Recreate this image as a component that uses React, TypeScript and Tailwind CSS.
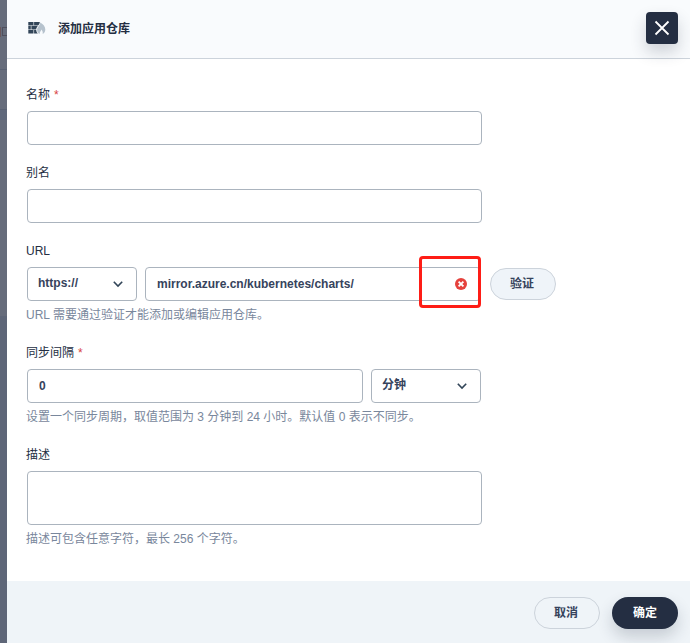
import React from 'react';

type FieldProps = {
  label: string;
  required?: boolean;
  hint?: string;
  children: React.ReactNode;
};

const inputCss =
  'block h-[34px] rounded-[4px] border border-[#abb4be] bg-white px-[11px] font-bold text-[#36435c] outline-none';

const Field: React.FC<FieldProps> = ({ label, required, hint, children }) => (
  <div>
    <div className="mb-1.5 -ml-px h-5 leading-5 text-[#242e42]">
      {label}
      {required && <span className="ml-1 text-[#d8433f]">*</span>}
    </div>
    {children}
    {hint && <div className="mt-1 -ml-px h-5 leading-5 whitespace-nowrap text-[#79879c]">{hint}</div>}
  </div>
);

const Select: React.FC<{ value: string }> = ({ value }) => (
  <button
    type="button"
    className="flex h-[34px] w-[110px] items-center justify-between rounded-[4px] border border-[#abb4be] bg-white pr-[13px] pl-[10px] font-bold text-[#36435c]"
  >
    <span className="-mt-0.5">{value}</span>
    <svg className="h-[10px] w-[10px]" viewBox="0 0 10 10" fill="none" stroke="#324558" strokeWidth="1.6">
      <path d="M0.8 2.8 5 7l4.2-4.2" />
    </svg>
  </button>
);

const RepoIcon = () => (
  <svg className="h-5 w-5" viewBox="0 0 20 20">
    <g fill="#324558">
      <path d="M1.3 4h5.2v3.2H1.3zM7.1 4h5.7c0 1.2-.6 2.2-1.4 3.2H7.1zM1.3 7.8h2.5v3.6H1.3zM4.4 7.8H11c-.9 1.1-1.7 2.2-1.8 3.6H4.4zM1.3 12h5.2v3.6H1.3zM7.1 12h2.1c.1 1.5.7 2.7 1.6 3.6H7.1z" />
    </g>
    <path
      fill="#b6c2cd"
      d="M13.3 4.4c3.1 1.7 5 4.1 5 7 0 2-1 3.7-2.6 4.6.3-1.9-.2-3.3-1.4-4.5-.1 1.5-1.4 2.2-1.6 3.7-.1.4 0 .6.1.9-1.7-.8-2.7-2.4-2.7-4.4 0-2.8 3.1-4.1 3.2-7.3z"
    />
  </svg>
);

export default function App() {
  return (
    <div className="flex h-[643px] w-[690px] overflow-hidden bg-white font-['Liberation_Sans','Noto_Sans_CJK_SC',sans-serif] text-xs">
      <div className="flex w-[7px] shrink-0 flex-col overflow-hidden bg-[#5e6678]">
        <div className="h-[316px] shrink-0 bg-[#666c7b]">
          <div className="flex h-[70px] items-start gap-px border-b border-[#596173] pt-[27px]">
            <div className="h-2.5 w-px shrink-0 bg-[#6b5659]" />
            <div className="h-[9px] w-[7px] shrink-0 border border-[#50505e]" />
          </div>
          <div className="mt-[39px] h-[11px] border-t border-[#596173] bg-[#5f687b]" />
        </div>
      </div>
      <div className="flex min-w-0 flex-1 flex-col">
        <header className="flex h-[59px] shrink-0 items-center border-b border-[#ccd3db] bg-[#f9fbfd] pr-3 pb-[2px] pl-5">
          <RepoIcon />
          <h1 className="mt-px ml-[11px] flex-1 font-bold text-[#242e42]">添加应用仓库</h1>
          <button
            type="button"
            className="flex h-8 w-8 items-center justify-center rounded-[4px] bg-[#242e42] shadow-[0_8px_16px_0_rgba(36,46,66,0.2)]"
          >
            <svg className="h-4 w-4" viewBox="0 0 16 16" fill="none" stroke="#fff" strokeWidth="1.8">
              <path d="M1.5 1.5l13 13M14.5 1.5l-13 13" />
            </svg>
          </button>
        </header>

        <main className="flex flex-1 flex-col gap-[18px] pt-[26px] pl-5">
          <Field label="名称" required>
            <input className={`${inputCss} w-[455px]`} />
          </Field>
          <Field label="别名">
            <input className={`${inputCss} w-[455px]`} />
          </Field>
          <Field label="URL" hint="URL 需要通过验证才能添加或编辑应用仓库。">
            <div className="flex items-center">
              <Select value="https://" />
              <div className="relative ml-2">
                <input className={`${inputCss} w-[336px]`} defaultValue="mirror.azure.cn/kubernetes/charts/" />
                <svg className="absolute top-[11px] left-[310px] h-3 w-3" viewBox="0 0 12 12">
                  <circle cx="6" cy="6" r="6" fill="#e5423d" />
                  <path d="M3.6 3.6l4.8 4.8M8.4 3.6L3.6 8.4" stroke="#fff" strokeWidth="1.9" />
                </svg>
                <div className="absolute -top-[11px] left-[274px] h-[52px] w-[62px] rounded-[4px] border-[3px] border-[#fe1d16]" />
              </div>
              <button
                type="button"
                className="ml-[9px] h-8 w-[66px] rounded-full border border-[#ccd3db] bg-[#eff4f9] pr-[2px] font-bold text-[#36435c]"
              >
                验证
              </button>
            </div>
          </Field>
          <Field label="同步间隔" required hint="设置一个同步周期，取值范围为 3 分钟到 24 小时。默认值 0 表示不同步。">
            <div className="flex gap-2">
              <input className={`${inputCss} w-[336px]`} defaultValue="0" />
              <Select value="分钟" />
            </div>
          </Field>
          <Field label="描述" hint="描述可包含任意字符，最长 256 个字符。">
            <textarea className="block h-[54px] w-[455px] resize-none rounded-[4px] border border-[#abb4be] bg-white outline-none" />
          </Field>
        </main>

        <footer className="flex h-[62px] shrink-0 items-center justify-end gap-3 bg-[#eff4f8] pt-[2px] pr-3">
          <button type="button" className="h-8 w-[66px] rounded-full border border-[#ccd3db] pr-[2px] font-bold text-[#36435c]">
            取消
          </button>
          <button
            type="button"
            className="h-8 w-[66px] rounded-full bg-[#242e42] font-bold text-white shadow-[0_8px_16px_0_rgba(36,46,66,0.2)]"
          >
            确定
          </button>
        </footer>
      </div>
    </div>
  );
}
